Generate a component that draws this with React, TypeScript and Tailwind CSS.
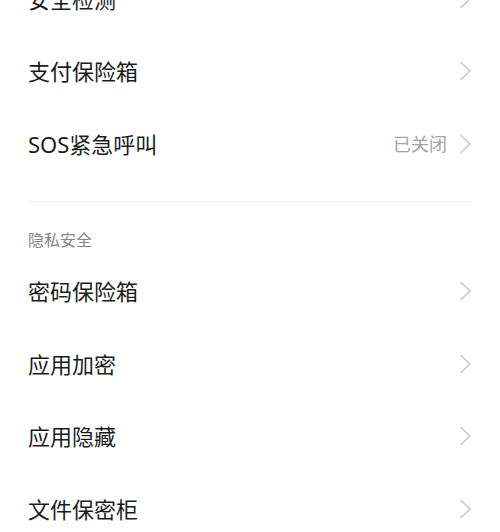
import React from "react"

const font = { fontFamily: '"Noto Sans", "Noto Sans CJK SC", sans-serif' }

function Chevron() {
  return (
    <svg width="12" height="20" viewBox="0 0 12 20" fill="none" className="shrink-0">
      <polyline points="1,1.5 10,10 1,18.5" stroke="#c6c6c6" strokeWidth="1.5" strokeLinecap="round" strokeLinejoin="round" />
    </svg>
  )
}

function Row({ title, value }: { title: string; value?: string }) {
  return (
    <div className="h-[72.5px] flex items-center justify-between px-[28px]">
      <span className="text-[22px] leading-none text-[#1c1c1c]">{title}</span>
      <div className="flex items-center gap-[13px]">
        {value && <span className="text-[18px] leading-none text-[#a3a3a3]">{value}</span>}
        <Chevron />
      </div>
    </div>
  )
}

export default function App() {
  const top = [{ title: "安全检测" }, { title: "支付保险箱" }, { title: "SOS紧急呼叫", value: "已关闭" }]
  const privacy = [{ title: "密码保险箱" }, { title: "应用加密" }, { title: "应用隐藏" }, { title: "文件保密柜" }]

  return (
    <div className="w-[500px] h-[532px] overflow-hidden bg-white" style={font}>
      <div className="-mt-[37.5px]">
        {top.map((r, i) => (
          <Row key={i} title={r.title} value={r.value} />
        ))}
        <div className="mt-[21px] mx-[28px] h-px bg-[#f2f2f2]" />
        <div className="pt-[29px] pb-[6px] px-[28px]">
          <span className="block text-[16px] leading-[18px] text-[#858585]">隐私安全</span>
        </div>
        {privacy.map((r, i) => (
          <Row key={i} title={r.title} />
        ))}
      </div>
    </div>
  )
}
